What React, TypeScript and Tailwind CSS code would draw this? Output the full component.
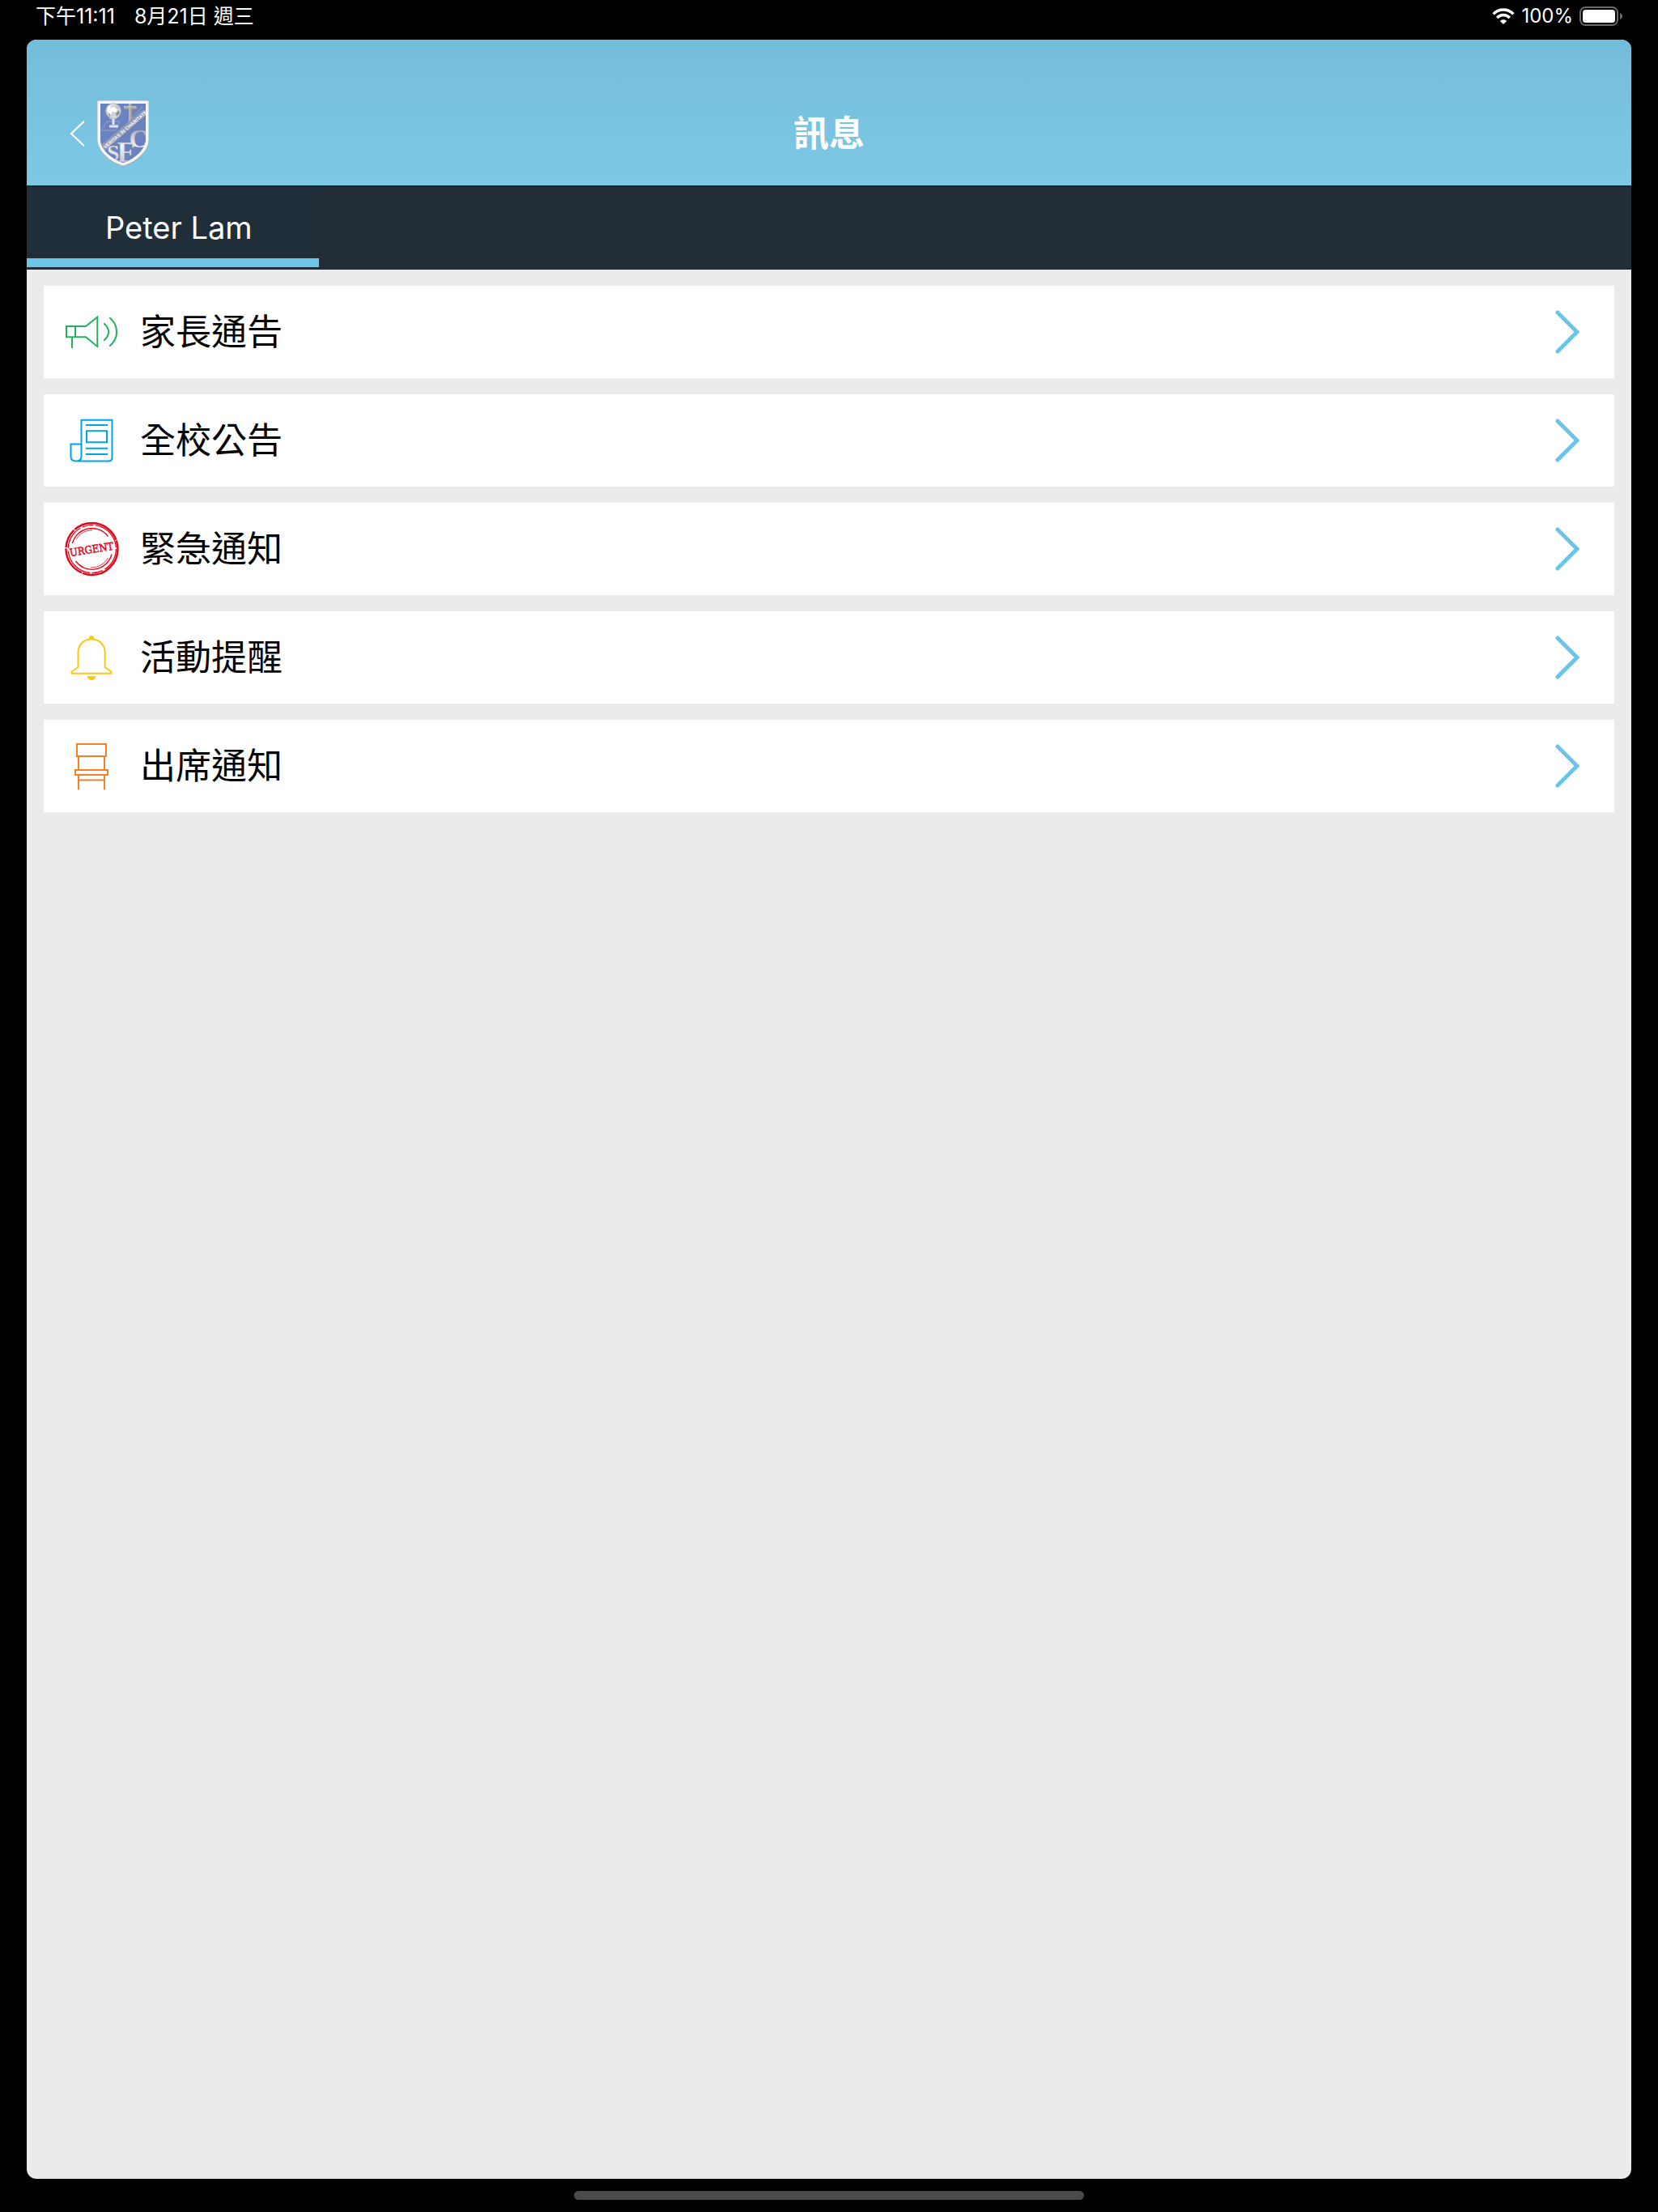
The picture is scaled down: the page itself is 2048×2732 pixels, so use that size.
import React from "react";

function BackIcon() {
  return (
    <svg className="w-5 h-8" viewBox="0 0 20 32" fill="none" stroke="white" strokeWidth="2.2">
      <path d="M18 0.8 L2 16 L18 31.2" />
    </svg>
  );
}

function WifiIcon() {
  return (
    <svg className="w-7 h-5" viewBox="0 0 28 20" fill="none" stroke="white" strokeWidth="3.4">
      <path d="M1.6 7.4 C8.4 0.2 19.6 0.2 26.4 7.4" />
      <path d="M6.2 12 C10.5 7.4 17.5 7.4 21.8 12" />
      <path d="M14 20 L9.9 16 C12.2 13.8 15.8 13.8 18.1 16 Z" fill="white" stroke="none" />
    </svg>
  );
}

function BatteryIcon() {
  return (
    <svg className="w-[54px] h-6" viewBox="0 0 54 24" fill="none">
      <rect x="1" y="1" width="46" height="22" rx="6.5" stroke="#6b6b6b" strokeWidth="2" />
      <rect x="4" y="4" width="40" height="16" rx="3.5" fill="white" />
      <path d="M50 8 C54 9.4 54 14.6 50 16 Z" fill="#6b6b6b" />
    </svg>
  );
}

function Crest() {
  return (
    <svg className="w-[66px] h-[84px] overflow-visible" viewBox="0 0 66 84" fill="none">
      <defs>
        <linearGradient id="silver" x1="0" y1="0" x2="1" y2="1">
          <stop offset="0" stopColor="#ffffff" />
          <stop offset="0.5" stopColor="#c3c5ca" />
          <stop offset="1" stopColor="#fafafa" />
        </linearGradient>
        <linearGradient id="letter" x1="0" y1="0" x2="0" y2="1">
          <stop offset="0" stopColor="#9a9da3" />
          <stop offset="0.5" stopColor="#f2f3f5" />
          <stop offset="1" stopColor="#b9bbc0" />
        </linearGradient>
      </defs>
      <path d="M1 1 H65 V50 C65 64 50 78 33 83 C16 78 1 64 1 50 Z" fill="#a9adb5" />
      <path d="M2 2 H64 V50 C64 63 49 77 33 81 C17 77 2 63 2 50 Z" fill="#f5f6f8" />
      <path d="M5 5 H61 V50 C61 61 47 74 33 78 C19 74 5 61 5 50 Z" fill="#6b82c1" />
      <path d="M6 38 L13 27 H29 L24 38 Z M39 27 L57 9" stroke="#93a2cf" />
      <circle cx="21" cy="14" r="9.5" fill="url(#silver)" stroke="#9ea2aa" />
      <path d="M14 9 L17 8 L18 11 L22 9 L26 12 L24 16 L20 15 L18 19 L14 15 Z" fill="#ffffff" />
      <path d="M24 17 L28 13 L29 17 L25 21 Z M15 17 L17 18 L17 21 Z" fill="#8a8f9a" />
      <path d="M28 19 C25 24 22 25 16 23" stroke="#d8dade" />
      <path d="M21 24 V31 M16 33 H27" stroke="#e5e7ea" strokeWidth="3" />
      <path d="M42 5 V27 M34 10 H50" stroke="#a19f9d" strokeWidth="4" />
      <path d="M41 5 V27 M34 9 H49" stroke="#d3d3d3" />
      <path d="M6 56 L58 12 L61 19 L11 63 Z" fill="#9299b0" />
      <text
        transform="translate(11 61) rotate(-40.5)"
        fontSize="6"
        className="font-[family-name:'Liberation_Sans'] font-bold"
        fill="white"
      >
        VERITAS IN CHARITATE
      </text>
      <text
        x="13"
        y="75"
        className="font-[family-name:'Liberation_Serif'] font-bold"
        fill="url(#letter)"
        stroke="#8d9099"
        strokeWidth="0.3"
      >
        <tspan fontSize="28">S</tspan>
        <tspan fontSize="36" dx="-3" dy="2">E</tspan>
        <tspan fontSize="32" dx="-9" dy="-18">C</tspan>
      </text>
      <path d="M3 3 H63 V50 C63 62 48 76 33 80 C18 76 3 62 3 50 Z" stroke="#f5f6f8" strokeWidth="3" />
    </svg>
  );
}

function MegaphoneIcon() {
  return (
    <svg className="w-16 h-16" viewBox="0 0 64 64" fill="none" stroke="#22b35a" strokeWidth="2">
      <path d="M1 25 H25 L39.3 13.5 V50 L25 38.3 H1 Z" />
      <path d="M12 25 V38 M8 38 V52" />
      <path d="M47.3 21.3 Q59 32 47.3 42.7" />
      <path d="M54.3 14.3 C66 24 66 40 54.3 49.5" />
    </svg>
  );
}

function NewspaperIcon() {
  return (
    <svg className="w-16 h-16" viewBox="0 0 64 64" fill="none" stroke="#00a2ea" strokeWidth="2">
      <path d="M19.5 36.5 H6.5 V51.5 Q6.5 57.5 13 57.5 H53 Q57.5 57.5 57.5 53 V6.7 H19.5 V51.5 Q19.5 57.5 13 57.5" />
      <path d="M25 13 H52 M25 41.7 H52 M25 49 H52" />
      <path d="M26 20.3 H51 V34.3 H26 Z" />
    </svg>
  );
}

function UrgentIcon() {
  return (
    <svg className="w-16 h-16 overflow-visible" viewBox="0 0 64 64" fill="none" stroke="#e2061c">
      <circle cx="32.5" cy="32" r="32" strokeWidth="2.4" strokeDasharray="62 1 38 1.2 24 1" />
      <circle cx="32.8" cy="32" r="29.6" strokeWidth="1.3" strokeDasharray="30 3 14 2 41 4" />
      <path d="M8.4 25 A25 25 0 0 1 52.5 16.5" strokeWidth="1.4" />
      <path d="M13.5 19.5 A23 23 0 0 1 33 8.8" strokeWidth="0.8" />
      <path d="M57 38.5 A25 25 0 0 1 12.5 47" strokeWidth="1.4" />
      <path d="M52.5 43 A23 23 0 0 1 31 55" strokeWidth="0.8" />
      <text
        x="32"
        y="37"
        textAnchor="middle"
        transform="rotate(-9 32 32)"
        fontSize="13"
        className="font-[family-name:'DejaVu_Serif_Condensed','DejaVu_Serif',serif]"
        fill="#e2061c"
        strokeWidth="0.5"
      >
        URGENT
      </text>
    </svg>
  );
}

function BellIcon() {
  return (
    <svg className="w-16 h-16" viewBox="0 0 64 64" fill="none" stroke="#fdc90e" strokeWidth="2">
      <path d="M32 9.5 C22 9.5 15.5 16.5 15.5 26 V44 L7.7 49.5 V51.7 H56.3 V49.5 L48.7 44 V26 C48.7 16.5 42 9.5 32 9.5 Z" />
      <path d="M29 10 V7.5 Q29 5 32 5 Q35 5 35 7.5 V10 Z" fill="#fdc90e" stroke="none" />
      <path d="M26.7 55 H37.3 Q36.5 60 32 60 Q27.5 60 26.7 55 Z" fill="#fdc90e" stroke="none" />
    </svg>
  );
}

function ChairIcon() {
  return (
    <svg className="w-16 h-16" viewBox="0 0 64 64" fill="none" stroke="#f58025" strokeWidth="2">
      <path d="M14 5 H50 V20 H14 Z" />
      <path d="M16 20 V37 M48 20 V37" />
      <path d="M12 37 H52 V43 H12 Z" />
      <path d="M16 43 V61.5 M48 43 V61.5 M16 49.5 H48" />
    </svg>
  );
}

const items = [
  { label: "家長通告", icon: <MegaphoneIcon /> },
  { label: "全校公告", icon: <NewspaperIcon /> },
  { label: "緊急通知", icon: <UrgentIcon /> },
  { label: "活動提醒", icon: <BellIcon /> },
  { label: "出席通知", icon: <ChairIcon /> },
];

function StatusBar() {
  return (
    <div className="flex items-center justify-between pl-[11px] pr-[10px] pt-[5px] pb-[14px] text-white text-[25px] leading-[30px]">
      <div className="flex gap-6">
        <span>下午11:11</span>
        <span>8月21日 週三</span>
      </div>
      <div className="flex items-center gap-2 text-[24px]">
        <WifiIcon />
        <span>100%</span>
        <BatteryIcon />
      </div>
    </div>
  );
}

export default function App() {
  return (
    <div className="min-h-screen flex flex-col bg-black px-[33px] font-['Inter','Noto_Sans_CJK_TC',sans-serif]">
      <StatusBar />
      <div className="flex-1 flex flex-col rounded-xl overflow-hidden bg-[#ebebeb]">
        <header className="grid grid-cols-[1fr_auto_1fr] items-center pt-[51px] h-[180px] px-[53px] bg-linear-to-b from-[#73bddb] to-[#7dc8e5]">
          <button className="flex items-center gap-[13px] justify-self-start" aria-label="返回">
            <BackIcon />
            <Crest />
          </button>
          <h1 className="text-white text-[44px] leading-none font-bold">訊息</h1>
        </header>
        <nav className="flex border-t-2 border-[#1a262e] bg-[#222d36] pb-[3px]">
          <button className="bg-[#1f2e38] border-b-[11px] border-[#6cc4e8] pl-[97px] pr-[82px] pt-[26px] pb-[14px] text-white text-[38px] leading-[48px]">
            Peter Lam
          </button>
        </nav>
        <ul className="flex flex-col gap-5 px-[21px] py-5">
          {items.map((item) => (
            <li key={item.label}>
              <a href="#" className="flex items-center gap-7 bg-white py-[25px] pl-[27px] pr-[43px] text-black text-[44px] leading-[64px]">
                {item.icon}
                <span className="flex-1">{item.label}</span>
                <svg className="w-[30px] h-14" viewBox="0 0 30 56" fill="none" stroke="#6cc4e8" strokeWidth="5" strokeLinecap="round">
                  <path d="M3 4 L27 28 L3 52" />
                </svg>
              </a>
            </li>
          ))}
        </ul>
      </div>
      <div className="h-[11px] w-[630px] max-w-full self-center rounded-full bg-[#4a4a4a] mt-[15px] mb-[15px]" />
    </div>
  );
}
